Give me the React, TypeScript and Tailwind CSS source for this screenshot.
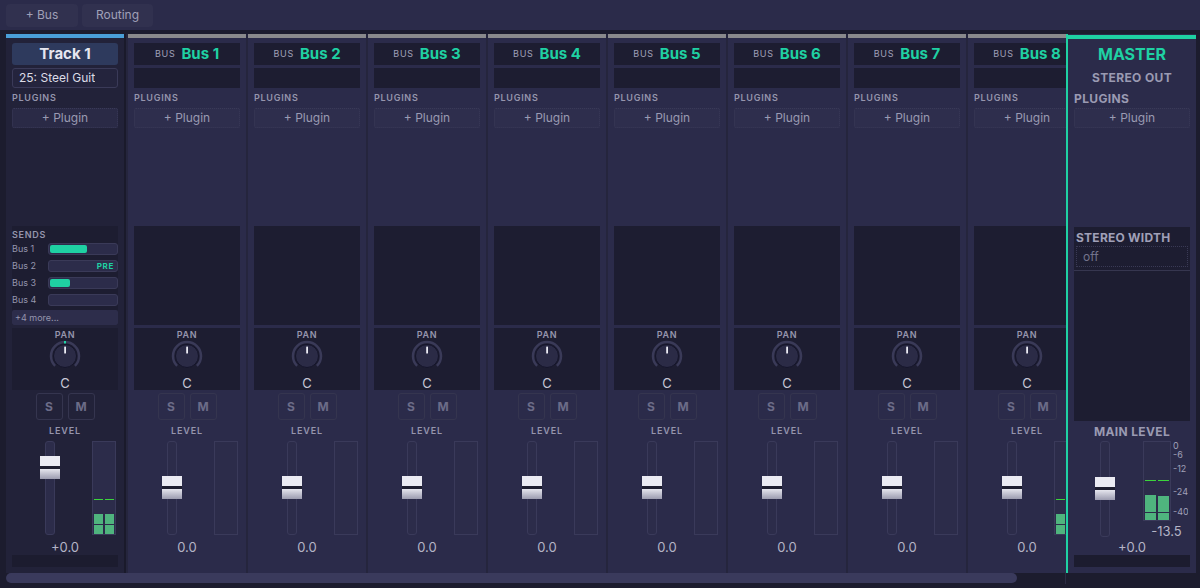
import React from "react";

const font = { fontFamily: "Inter, 'Noto Sans', sans-serif" };

function Knob({ active }: { active?: boolean }) {
  return (
    <svg width="32" height="32" viewBox="0 0 32 32" className="block">
      <path d="M 6.1 25.9 A 14 14 0 1 1 25.9 25.9" fill="none" stroke="#3a3a58" strokeWidth="2.5" />
      {active && <rect x="15" y="1" width="2" height="2.5" fill="#1fd1a3" />}
      <circle cx="16" cy="16" r="11.5" fill="#2b2b46" stroke="#15152a" strokeWidth="1" />
      <rect x="15.2" y="6.5" width="1.8" height="7" rx="0.6" fill="#ececf4" />
    </svg>
  );
}

function Fader({ offset }: { offset: string }) {
  return (
    <div className="relative h-full w-[10px] rounded-[3px] border border-[#3a3a5a] bg-[#2c2c4a]">
      <div className={`absolute left-[-6px] flex w-[20px] flex-col ${offset}`}>
        <div className="h-[10px] bg-[#ebebf3]" />
        <div className="h-[3px] bg-[#1e1e30]" />
        <div className="h-[10px] bg-gradient-to-b from-[#e6e6ee] to-[#9c9cb0]" />
      </div>
    </div>
  );
}

function Meter({ level }: { level?: boolean }) {
  return (
    <div className="flex h-[94px] w-[24px] gap-[2px] border border-[#3a3a5a] bg-[#2c2c4a] px-[1px]">
      {level &&
        [0, 1].map((i) => (
          <div key={i} className="flex w-[9px] flex-col justify-end">
            <div className="h-[1px] bg-[#3bd43b]" />
            <div className="h-[14px]" />
            <div className="h-[10px] bg-[#4fb47e]" />
            <div className="h-[1px]" />
            <div className="h-[9px] bg-[#4fb47e]" />
          </div>
        ))}
    </div>
  );
}

function Label({ children }: { children: React.ReactNode }) {
  return <div className="text-[9px] font-semibold leading-[12px] tracking-[0.08em] text-[#9595ad]">{children}</div>;
}

function PluginButton({ bg }: { bg: string }) {
  return (
    <div className={`mt-[4px] flex h-[20px] items-center justify-center rounded-[2px] border border-dotted border-[#3a3a58] text-[12px] text-[#9a9ab2] ${bg}`}>
      + Plugin
    </div>
  );
}

function PanBox({ active }: { active?: boolean }) {
  return (
    <div className="mt-[3px] flex h-[62px] flex-col items-center bg-[#1d1d31]">
      <div className="mt-[1px] text-[9px] font-semibold leading-[11px] tracking-[0.08em] text-[#9595ad]">PAN</div>
      <Knob active={active} />
      <div className="mt-[4px] text-[13px] leading-[14px] text-[#c8c8d6]">C</div>
    </div>
  );
}

function SoloMute() {
  return (
    <div className="mt-[3px] flex h-[27px] justify-center gap-[5px]">
      {["S", "M"].map((t) => (
        <div key={t} className="flex w-[27px] items-center justify-center rounded-[3px] border border-[#35354f] text-[12px] font-bold text-[#6c6c88]">
          {t}
        </div>
      ))}
    </div>
  );
}

function LevelSection({ value, capOffset, level }: { value: string; capOffset: string; level?: boolean }) {
  return (
    <>
      <div className="mt-[5px] text-center text-[9px] font-semibold leading-[12px] tracking-[0.1em] text-[#9595ad]">LEVEL</div>
      <div className="mt-[4px] flex h-[94px]">
        <div className="flex w-[76px] justify-center">
          <Fader offset={capOffset} />
        </div>
        <div className="ml-[4px]">
          <Meter level={level} />
        </div>
      </div>
      <div className="mt-[5px] text-center text-[13px] leading-[14px] text-[#b4b4c6]">{value}</div>
    </>
  );
}

function TrackStrip() {
  const sends = [
    { name: "Bus 1", fill: "w-[37px]" },
    { name: "Bus 2", pre: true },
    { name: "Bus 3", fill: "w-[20px]" },
    { name: "Bus 4" },
  ];
  return (
    <div className="flex w-[118px] shrink-0 flex-col bg-[#222239]">
      <div className="h-[4px] bg-[#4a9fd8]" />
      <div className="flex flex-col px-[6px]">
        <div className="mt-[5px] flex h-[22px] items-center justify-center rounded-[3px] bg-[#2e3a5d] text-[15px] font-bold text-[#e6e6f0]">
          Track 1
        </div>
        <div className="mt-[3px] flex h-[20px] items-center overflow-hidden whitespace-nowrap rounded-[3px] border border-[#3a3a58] bg-[#24243d] pl-[6px] pr-[20px] text-[12px] text-[#dcdce6]">
          <span className="overflow-hidden">25: Steel Guit</span>
        </div>
        <div className="mt-[4px]">
          <Label>PLUGINS</Label>
        </div>
        <PluginButton bg="bg-[#2a2a46]" />
        <div className="h-[98px]" />
        <div className="flex h-[99px] flex-col bg-[#1d1d31]">
          <div className="mt-[3px] text-[9px] font-semibold leading-[12px] tracking-[0.08em] text-[#9595ad]">SENDS</div>
          <div className="mt-[2px] flex flex-col gap-[5px]">
            {sends.map((s) => (
              <div key={s.name} className="flex h-[12px] items-center">
                <div className="w-[36px] text-[9px] text-[#9595ad]">{s.name}</div>
                <div className="flex h-[12px] flex-1 items-center justify-end rounded-[3px] border border-[#3a3a58] bg-[#2c2c4a] p-[1px]">
                  {s.fill && <div className={`mr-auto h-full rounded-[2px] bg-[#1fd1a3] ${s.fill}`} />}
                  {s.pre && <span className="pr-[2px] text-[8px] font-bold tracking-[0.08em] text-[#1fd1a3]">PRE</span>}
                </div>
              </div>
            ))}
          </div>
          <div className="mt-[4px] flex h-[16px] items-center rounded-[2px] bg-[#2d2d4b] pl-[3px] text-[9px] text-[#9595ad]">+4 more...</div>
        </div>
        <PanBox active />
        <SoloMute />
        <LevelSection value="+0.0" capOffset="top-[14px]" level />
        <div className="mt-[1px] h-[12px] bg-[#1c1c2f]" />
      </div>
    </div>
  );
}

function BusStrip({ n, level }: { n: number; level?: boolean }) {
  return (
    <div className="flex w-[120px] shrink-0 flex-col border-l-2 border-[#25253d] bg-[#2b2b4a]">
      <div className="h-[4px] bg-[#8a8a8c]" />
      <div className="flex flex-col px-[6px]">
        <div className="mt-[5px] flex h-[22px] items-center justify-center gap-[6px] bg-[#1d1d31]">
          <span className="text-[9px] tracking-[0.08em] text-[#a0a0b8]">BUS</span>
          <span className="text-[15px] font-bold text-[#1fd1a3]">Bus {n}</span>
        </div>
        <div className="mt-[3px] h-[20px] bg-[#1d1d31]" />
        <div className="mt-[4px]">
          <Label>PLUGINS</Label>
        </div>
        <PluginButton bg="bg-[#2e2e4d]" />
        <div className="h-[98px]" />
        <div className="h-[99px] bg-[#1d1d31]" />
        <PanBox />
        <SoloMute />
        <LevelSection value="0.0" capOffset="top-[34px]" level={level} />
      </div>
    </div>
  );
}

function MasterStrip() {
  const scale = [
    { t: "0", c: "top-[0px]" },
    { t: "-6", c: "top-[9px]" },
    { t: "-12", c: "top-[23px]" },
    { t: "-24", c: "top-[46px]" },
    { t: "-40", c: "top-[66px]" },
  ];
  return (
    <div className="flex h-[539px] w-[130px] shrink-0 flex-col border-l-2 border-[#1fd1a3] bg-[#2b2b4a]">
      <div className="mt-[1px] h-[4px] bg-[#1fd1a3]" />
      <div className="flex flex-col px-[6px]">
        <div className="mt-[5px] text-center text-[16px] font-bold leading-[20px] text-[#1fd1a3]">MASTER</div>
        <div className="mt-[7px] text-center text-[12px] font-bold leading-[14px] tracking-[0.03em] text-[#9a9ab2]">STEREO OUT</div>
        <div className="mt-[7px] text-[12px] font-bold leading-[13px] tracking-[0.03em] text-[#9a9ab2]">PLUGINS</div>
        <div className="mt-[3px] flex h-[20px] items-center justify-center rounded-[2px] border border-dotted border-[#3a3a58] bg-[#2e2e4d] text-[12px] text-[#9a9ab2]">
          + Plugin
        </div>
        <div className="h-[99px]" />
        <div className="flex h-[194px] flex-col bg-[#1d1d31]">
          <div className="mt-[4px] pl-[2px] text-[12px] font-bold leading-[13px] tracking-[0.02em] text-[#a0a0b8]">STEREO WIDTH</div>
          <div className="mx-[2px] mt-[2px] flex h-[21px] items-center border border-dotted border-[#3a3a55] pl-[6px] text-[12px] text-[#74748c]">off</div>
          <div className="mt-[3px] h-[1px] bg-[#36364f]" />
        </div>
        <div className="mt-[4px] text-center text-[12px] font-bold leading-[13px] tracking-[0.03em] text-[#9a9ab2]">MAIN LEVEL</div>
        <div className="mt-[3px] flex">
          <div className="flex h-[96px] w-[62px] justify-center">
            <Fader offset="top-[35px]" />
          </div>
          <div className="ml-[7px] flex w-[47px] flex-col items-center">
            <div className="flex w-full">
              <div className="flex h-[80px] w-[28px] gap-[2px] border border-[#3a3a5a] bg-[#2c2c4a] px-[1px]">
                {[0, 1].map((i) => (
                  <div key={i} className="flex w-[11px] flex-col justify-end">
                    <div className="h-[1px] bg-[#3bd43b]" />
                    <div className={i === 0 ? "h-[14px]" : "h-[15px]"} />
                    <div className={`${i === 0 ? "h-[17px]" : "h-[16px]"} bg-[#4fb47e]`} />
                    <div className="h-[1px]" />
                    <div className="h-[7px] bg-[#4fb47e]" />
                  </div>
                ))}
              </div>
              <div className="relative ml-[2px] h-[80px] w-[15px] overflow-hidden">
                {scale.map((s) => (
                  <div key={s.t} className={`absolute left-0 whitespace-nowrap text-[9px] leading-[10px] text-[#a0a0b8] ${s.c}`}>
                    {s.t}
                  </div>
                ))}
              </div>
            </div>
            <div className="mt-[3px] text-[13px] leading-[14px] text-[#b4b4c6]">-13.5</div>
          </div>
        </div>
        <div className="mt-[2px] text-center text-[13px] leading-[14px] text-[#b4b4c6]">+0.0</div>
        <div className="mt-[1px] h-[12px] bg-[#1c1c2f]" />
      </div>
    </div>
  );
}

export default function App() {
  return (
    <div className="flex h-[588px] w-[1200px] flex-col overflow-hidden bg-[#1c1c2e]" style={font}>
      <div className="flex h-[30px] items-center gap-[4px] bg-[#2b2b4a] px-[6px]">
        <div className="flex h-[23px] w-[72px] items-center justify-center rounded-[4px] bg-[#31314f] text-[12px] text-[#a0a0b8]">+ Bus</div>
        <div className="flex h-[23px] w-[71px] items-center justify-center rounded-[4px] bg-[#31314f] text-[12px] text-[#a0a0b8]">Routing</div>
      </div>
      <div className="mt-[4px] flex">
        <div className="flex w-[1066px] flex-col">
          <div className="flex h-[539px] overflow-hidden pl-[6px]">
            <TrackStrip />
            <div className="w-[2px] shrink-0 bg-[#1a1a2b]" />
            {[1, 2, 3, 4, 5, 6, 7, 8].map((n) => (
              <BusStrip key={n} n={n} level={n === 8} />
            ))}
          </div>
          <div className="h-[11px] border-r border-[#2c2c44] pl-[6px] pr-[48px]">
            <div className="h-[10px] rounded-full bg-[#3a3a5c]" />
          </div>
        </div>
        <MasterStrip />
      </div>
    </div>
  );
}
